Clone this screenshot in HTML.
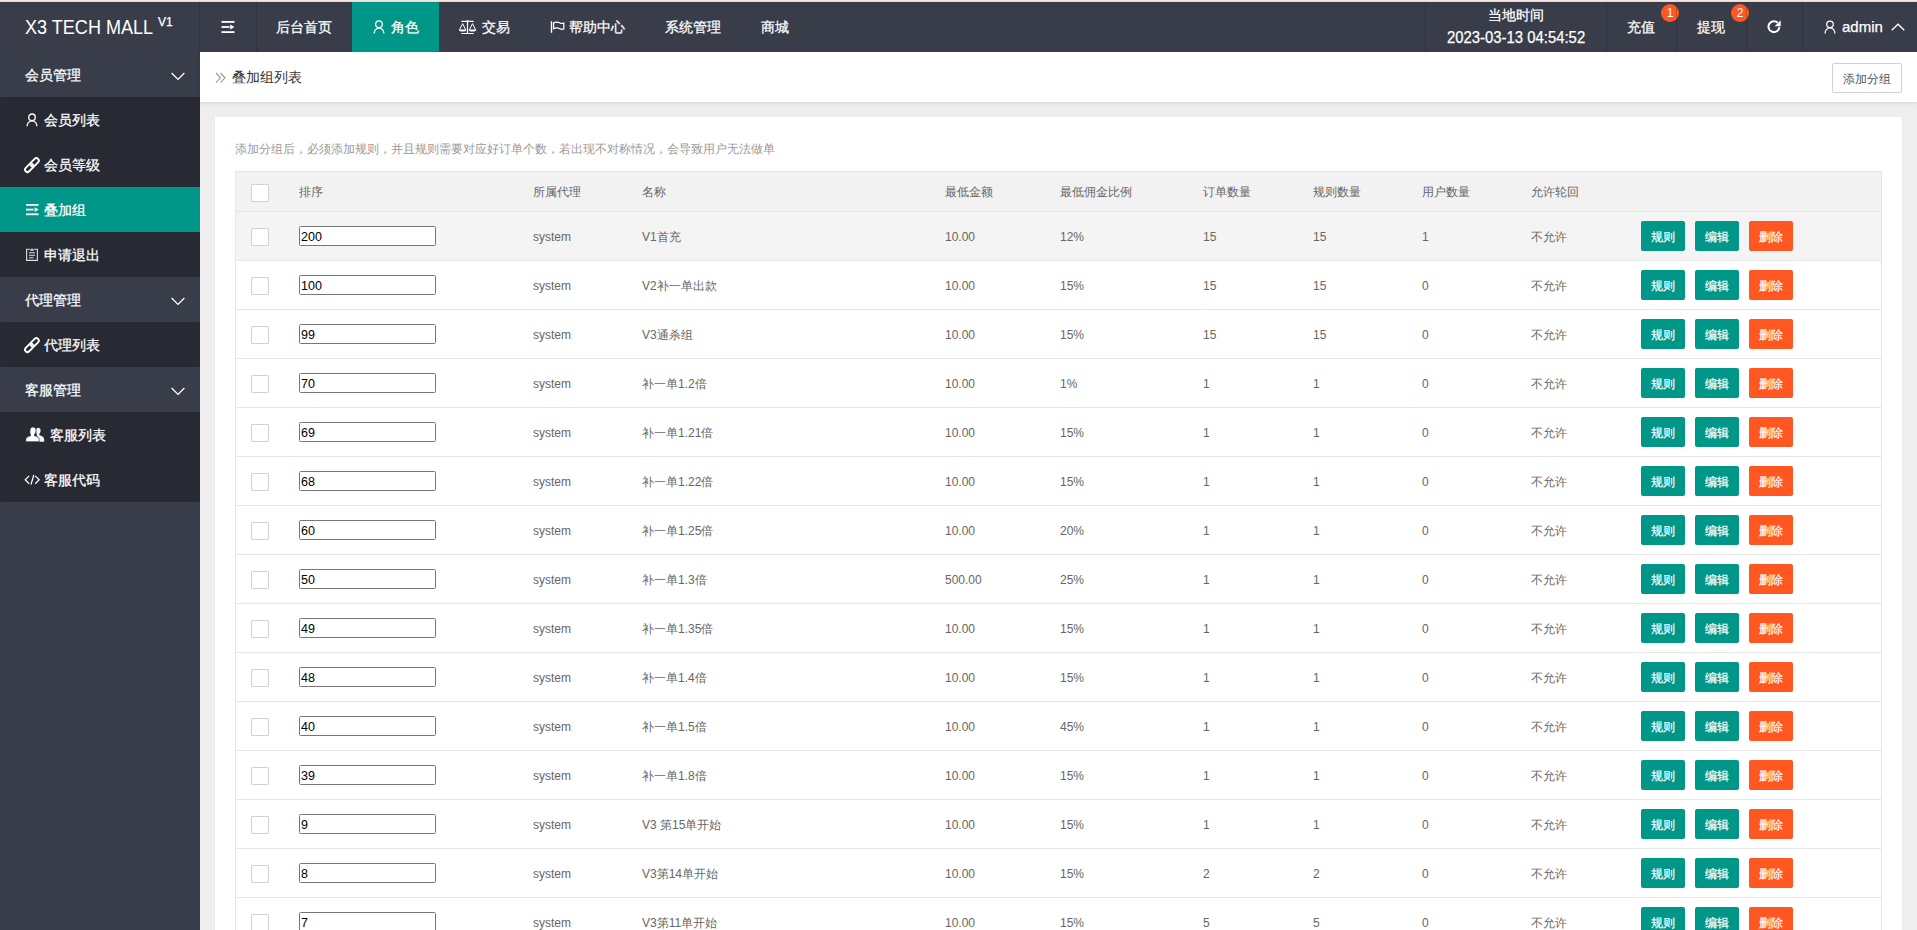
<!DOCTYPE html><html><head><meta charset="utf-8"><style>*{margin:0;padding:0;box-sizing:border-box}
html,body{width:1917px;height:930px;overflow:hidden}
body{background:#eeeeee;font-family:"Liberation Sans",sans-serif;position:relative;color:#666}
.topline{position:absolute;left:0;top:0;width:1917px;height:2px;background:linear-gradient(#f9e5de 0,#f9e5de 1px,#e8d8d2 1px,#e8d8d2 2px)}
.hdr{position:absolute;left:0;top:2px;width:1917px;height:50px;background:#393d49;color:#fff;font-size:14px}
.hdr .sep{position:absolute;top:0;width:1px;height:50px;background:rgba(0,0,0,.16)}
.hdr .t{position:absolute;white-space:nowrap;line-height:16px;-webkit-text-stroke:0.25px #fff}
.logo{position:absolute;left:25px;top:12px;font-size:21px;line-height:25px;white-space:nowrap;transform:scaleX(0.86);transform-origin:0 0}
.logo sup{font-size:12px;position:relative;top:-9px;vertical-align:baseline;margin-left:3px}
.side{position:absolute;left:0;top:52px;width:200px;height:878px;background:#393d49;color:#fff;font-size:14px}
.side .p{position:absolute;left:0;width:200px;height:45px}
.side .c{position:absolute;left:0;width:200px;background:#282a33;border-radius:2px}
.side .t{position:absolute;white-space:nowrap;line-height:16px;-webkit-text-stroke:0.25px #fff}
.side .act{position:absolute;left:0;width:200px;height:45px;background:#009688}
.crumb{position:absolute;left:200px;top:52px;width:1717px;height:50px;background:#fff;box-shadow:0 1px 3px rgba(0,0,0,.12)}
.crumb .t{position:absolute;left:32px;top:17px;font-size:14px;color:#333;line-height:16px;white-space:nowrap}
.crumb .bt{position:absolute;left:1632px;top:11px;width:70px;height:30px;border:1px solid #d2d2d2;border-radius:2px;font-size:12px;color:#555;line-height:30px;text-align:center}
.card{position:absolute;left:215px;top:117px;width:1687px;height:830px;background:#fff;box-shadow:0 1px 2px 0 rgba(0,0,0,.05)}
.hint{position:absolute;left:20px;top:25px;font-size:12px;color:#999;line-height:14px;white-space:nowrap}
.tbl{position:absolute;left:20px;top:54px;width:1647px;border-left:1px solid #e6e6e6;border-right:1px solid #e6e6e6;border-top:1px solid #e6e6e6}
.thead{position:relative;height:40px;background:#f2f2f2;border-bottom:1px solid #e6e6e6}
.tr{position:relative;height:49px;border-bottom:1px solid #e6e6e6;background:#fff}
.tr.hov{background:#f4f4f4}
.tbl span{position:absolute;font-size:12px;line-height:14px;white-space:nowrap;color:#666}
.thead span{top:13px}
.tr span{top:18px}
.cb{position:absolute;width:18px;height:18px;border:1px solid #d2d2d2;border-radius:1px;background:#fff}
.thead .cb{top:12px}
.tr .cb{top:16px}
.inp{position:absolute;top:14px;width:137px;height:20px;border:1px solid #767676;border-radius:1.5px;background:#fff;font-weight:normal;font-size:12.5px;color:#000;padding-left:1px;line-height:20px}
.btn{position:absolute;top:9px;width:44px;height:30px;border-radius:2px;color:#fff;font-style:normal;font-size:12px;line-height:32px;text-align:center;-webkit-text-stroke:0.2px #fff}
.btn.g{background:#009688}
.btn.o{background:#ff5722}
.badge{position:absolute;top:2px;width:18px;height:18px;border-radius:50%;background:#ff5722;color:#fff;font-size:12px;line-height:18px;text-align:center}
svg{position:absolute;overflow:visible}
</style></head><body><div class="topline"></div><div style="position:absolute;left:0;top:2px;width:1917px;height:1px;background:#2f333f"></div>
<div class="hdr">
 <div class="logo">X3 TECH MALL</div><div class="t" style="left:158px;top:13px;font-size:12px;line-height:14px">V1</div>
 <div class="sep" style="left:199px"></div>
 <div class="sep" style="left:256px"></div>
 <svg style="left:221px;top:19px" width="14" height="12" viewBox="0 0 14 12"><rect x="0.5" y="0" width="13" height="1.8" fill="#fff"/><rect x="0.5" y="5.1" width="8" height="1.8" fill="#fff"/><path d="M9.2 3.6 L13.5 6 L9.2 8.4Z" fill="#fff"/><rect x="0.5" y="10.2" width="13" height="1.8" fill="#fff"/></svg>
 <div class="t" style="left:276px;top:17px">后台首页</div>
 <div style="position:absolute;left:352px;top:0;width:87px;height:50px;background:#009688"></div>
 <svg style="left:373px;top:18px" width="12" height="14" viewBox="0 0 12 14"><circle cx="6" cy="4.2" r="3.3" fill="none" stroke="#fff" stroke-width="1.25"/><path d="M1.1 13.6 A4.9 5.6 0 0 1 10.9 13.6" fill="none" stroke="#fff" stroke-width="1.25"/></svg>
 <div class="t" style="left:391px;top:17px">角色</div>
 <svg style="left:458px;top:16px" width="19" height="17" viewBox="0 0 19 17"><path d="M3.4 3.4 H15.7 M9.5 3.4 V15.5 M3.4 15.5 H15.7" stroke="#fff" stroke-width="1.2" fill="none"/><circle cx="9.5" cy="3.3" r="1.1" fill="#fff"/><path d="M4.6 5.6 L1.6 11.7 M4.6 5.6 L7.6 11.7 M14.5 5.6 L11.5 11.7 M14.5 5.6 L17.5 11.7" stroke="#fff" stroke-width="1" fill="none"/><path d="M0.8 11.4 H8.4 A3.8 2 0 0 1 0.8 11.4Z M10.7 11.4 H18.3 A3.8 2 0 0 1 10.7 11.4Z" fill="#fff"/></svg>
 <div class="t" style="left:482px;top:17px">交易</div>
 <svg style="left:550px;top:14px" width="16" height="18" viewBox="0 0 16 18"><path d="M1.5 5.2 V16.8" stroke="#fff" stroke-width="1.4"/><path d="M3.6 6.9 C6 5.6 8 5.9 10 7 C11.5 7.8 12.5 7.6 13.8 7.1 V12.9 C12.5 13.4 11.5 13.6 10 12.8 C8 11.7 6 11.4 3.6 12.7Z" stroke="#fff" stroke-width="1.2" fill="none"/></svg>
 <div class="t" style="left:569px;top:17px">帮助中心</div>
 <div class="t" style="left:665px;top:17px">系统管理</div>
 <div class="t" style="left:761px;top:17px">商城</div>
 <div class="sep" style="left:1425px"></div>
 <div class="t" style="left:1488px;top:5px">当地时间</div>
 <div class="t" style="left:1447px;top:28px;font-size:16px;transform:scaleX(0.93);transform-origin:0 0">2023-03-13 04:54:52</div>
 <div class="badge" style="left:1661px">1</div>
 <div class="badge" style="left:1731px">2</div>
 <div class="sep" style="left:1606px"></div>
 <div class="t" style="left:1627px;top:17px">充值</div>
 <div class="sep" style="left:1676px"></div>
 <div class="t" style="left:1697px;top:17px">提现</div>
 <div class="sep" style="left:1746px"></div>
 <svg style="left:1766px;top:17px" width="16" height="16" viewBox="0 0 16 16"><path d="M13.35 8.2 A5.45 5.45 0 1 1 11.75 3.75" stroke="#fff" stroke-width="2" fill="none"/><path d="M14.7 1.2 V7.3 H8.6Z" fill="#fff"/></svg>
 <div class="sep" style="left:1802px"></div>
 <svg style="left:1824px;top:18px" width="12" height="14" viewBox="0 0 12 14"><circle cx="6" cy="4.3" r="3.3" fill="none" stroke="#fff" stroke-width="1.25"/><path d="M1.1 13.4 A4.9 5.6 0 0 1 10.9 13.4" fill="none" stroke="#fff" stroke-width="1.25"/></svg>
 <div class="t" style="left:1842px;top:17px;font-size:15px">admin</div>
 <svg style="left:1891px;top:20px" width="14" height="10" viewBox="0 0 14 10"><path d="M0.7 8.3 L7 2.2 L13.3 8.3" stroke="#fff" stroke-width="1.3" fill="none"/></svg>
</div>
<div class="side">
 <div class="p" style="top:0"><div class="t" style="left:25px;top:15px">会员管理</div><svg style="left:171px;top:20px" width="14" height="9" viewBox="0 0 14 9"><path d="M0.6 1 L7 7.4 L13.4 1" stroke="#fff" stroke-width="1.3" fill="none"/></svg></div>
 <div class="c" style="top:45px;height:180px"></div>
 <svg style="left:26px;top:61px" width="12" height="14" viewBox="0 0 12 14"><circle cx="6" cy="4.3" r="3.3" fill="none" stroke="#fff" stroke-width="1.3"/><path d="M1.1 13.2 A4.9 5.4 0 0 1 10.9 13.2" fill="none" stroke="#fff" stroke-width="1.3"/></svg>
 <div class="t" style="left:44px;top:60px">会员列表</div>
 <svg style="left:24px;top:105px" width="16" height="16" viewBox="0 0 16 16"><g fill="none" stroke="#fff" stroke-width="1.9"><rect x="-4.9" y="-2.45" width="9.8" height="4.9" rx="2.45" transform="translate(5.2 10.8) rotate(-45)"/><rect x="-4.9" y="-2.45" width="9.8" height="4.9" rx="2.45" transform="translate(10.6 5.4) rotate(-45)"/></g></svg>
 <div class="t" style="left:44px;top:105px">会员等级</div>
 <div class="act" style="top:135px"></div>
 <svg style="left:26px;top:152px" width="13" height="12" viewBox="0 0 13 12"><rect x="0" y="0" width="12.5" height="1.8" fill="#fff"/><rect x="0" y="4.7" width="7.5" height="1.8" fill="#fff"/><path d="M8.6 3.3 L12.6 5.6 L8.6 7.9Z" fill="#fff"/><rect x="0" y="9.4" width="12.5" height="1.8" fill="#fff"/></svg>
 <div class="t" style="left:44px;top:150px">叠加组</div>
 <svg style="left:26px;top:196px" width="12" height="13" viewBox="0 0 12 13"><path d="M4 1.2 H0.6 V12.4 H11.4 V1.2 H8" stroke="#ddd" stroke-width="1.1" fill="none"/><path d="M4 2.8 L5 0.8 H7 L8 2.8Z" fill="#ddd"/><path d="M3 4.7 H9 M3 7.2 H9 M3 9.7 H7.5" stroke="#ddd" stroke-width="1.1"/></svg>
 <div class="t" style="left:44px;top:195px">申请退出</div>
 <div class="p" style="top:225px"><div class="t" style="left:25px;top:15px">代理管理</div><svg style="left:171px;top:20px" width="14" height="9" viewBox="0 0 14 9"><path d="M0.6 1 L7 7.4 L13.4 1" stroke="#fff" stroke-width="1.3" fill="none"/></svg></div>
 <div class="c" style="top:270px;height:45px"></div>
 <svg style="left:24px;top:285px" width="16" height="16" viewBox="0 0 16 16"><g fill="none" stroke="#fff" stroke-width="1.9"><rect x="-4.9" y="-2.45" width="9.8" height="4.9" rx="2.45" transform="translate(5.2 10.8) rotate(-45)"/><rect x="-4.9" y="-2.45" width="9.8" height="4.9" rx="2.45" transform="translate(10.6 5.4) rotate(-45)"/></g></svg>
 <div class="t" style="left:44px;top:285px">代理列表</div>
 <div class="p" style="top:315px"><div class="t" style="left:25px;top:15px">客服管理</div><svg style="left:171px;top:20px" width="14" height="9" viewBox="0 0 14 9"><path d="M0.6 1 L7 7.4 L13.4 1" stroke="#fff" stroke-width="1.3" fill="none"/></svg></div>
 <div class="c" style="top:360px;height:90px"></div>
 <svg style="left:25px;top:375px" width="20" height="16" viewBox="0 0 20 16"><path d="M11 3.5 C11 1.7 12.2 0.8 13.3 0.8 C14.5 0.8 15.6 1.8 15.6 3.6 C15.6 5 15 6.3 14.3 6.9 V8.3 C17 9 19.2 10 19.2 12.5 V14.8 H13 Z" fill="#fff" opacity=".95"/><path d="M5 3.2 C5 1.2 6.3 0 8 0 C9.7 0 11 1.2 11 3.2 C11 5 10.4 6.6 9.5 7.3 V8.8 C12.5 9.5 14.2 10.5 14.2 12.7 V14.8 H0.8 V12.7 C0.8 10.5 2.5 9.5 5.5 8.8 V7.3 C4.6 6.6 5 5 5 3.2Z" fill="#fff" stroke="#282a33" stroke-width="0.7"/></svg>
 <div class="t" style="left:50px;top:375px">客服列表</div>
 <svg style="left:24px;top:423px" width="17" height="10" viewBox="0 0 17 10"><path d="M5.2 0.9 L1.2 4.8 L5.2 8.7 M11.2 0.9 L15.2 4.8 L11.2 8.7" stroke="#fff" stroke-width="1.2" fill="none"/><path d="M9.8 0 L7 9.5" stroke="#fff" stroke-width="1.2"/></svg>
 <div class="t" style="left:44px;top:420px">客服代码</div>
</div>
<div class="crumb"><svg style="left:15px;top:20px" width="12" height="12" viewBox="0 0 12 12"><path d="M1 1 L5.5 5.8 L1 10.6 M5.5 1 L10 5.8 L5.5 10.6" stroke="#999" stroke-width="1.1" fill="none"/></svg><div class="t">叠加组列表</div><div class="bt">添加分组</div></div>
<div class="card"><div class="hint">添加分组后，必须添加规则，并且规则需要对应好订单个数，若出现不对称情况，会导致用户无法做单</div><div class="tbl"><div class="thead"><i class="cb" style="left:15px"></i><span style="left:63px">排序</span><span style="left:297px">所属代理</span><span style="left:406px">名称</span><span style="left:709px">最低金额</span><span style="left:824px">最低佣金比例</span><span style="left:967px">订单数量</span><span style="left:1077px">规则数量</span><span style="left:1186px">用户数量</span><span style="left:1295px">允许轮回</span></div><div class="tr hov"><i class="cb" style="left:15px"></i><b class="inp" style="left:63px">200</b><span style="left:297px">system</span><span style="left:406px">V1首充</span><span style="left:709px">10.00</span><span style="left:824px">12%</span><span style="left:967px">15</span><span style="left:1077px">15</span><span style="left:1186px">1</span><span style="left:1295px">不允许</span><em class="btn g" style="left:1405px">规则</em><em class="btn g" style="left:1459px">编辑</em><em class="btn o" style="left:1513px">删除</em></div><div class="tr"><i class="cb" style="left:15px"></i><b class="inp" style="left:63px">100</b><span style="left:297px">system</span><span style="left:406px">V2补一单出款</span><span style="left:709px">10.00</span><span style="left:824px">15%</span><span style="left:967px">15</span><span style="left:1077px">15</span><span style="left:1186px">0</span><span style="left:1295px">不允许</span><em class="btn g" style="left:1405px">规则</em><em class="btn g" style="left:1459px">编辑</em><em class="btn o" style="left:1513px">删除</em></div><div class="tr"><i class="cb" style="left:15px"></i><b class="inp" style="left:63px">99</b><span style="left:297px">system</span><span style="left:406px">V3通杀组</span><span style="left:709px">10.00</span><span style="left:824px">15%</span><span style="left:967px">15</span><span style="left:1077px">15</span><span style="left:1186px">0</span><span style="left:1295px">不允许</span><em class="btn g" style="left:1405px">规则</em><em class="btn g" style="left:1459px">编辑</em><em class="btn o" style="left:1513px">删除</em></div><div class="tr"><i class="cb" style="left:15px"></i><b class="inp" style="left:63px">70</b><span style="left:297px">system</span><span style="left:406px">补一单1.2倍</span><span style="left:709px">10.00</span><span style="left:824px">1%</span><span style="left:967px">1</span><span style="left:1077px">1</span><span style="left:1186px">0</span><span style="left:1295px">不允许</span><em class="btn g" style="left:1405px">规则</em><em class="btn g" style="left:1459px">编辑</em><em class="btn o" style="left:1513px">删除</em></div><div class="tr"><i class="cb" style="left:15px"></i><b class="inp" style="left:63px">69</b><span style="left:297px">system</span><span style="left:406px">补一单1.21倍</span><span style="left:709px">10.00</span><span style="left:824px">15%</span><span style="left:967px">1</span><span style="left:1077px">1</span><span style="left:1186px">0</span><span style="left:1295px">不允许</span><em class="btn g" style="left:1405px">规则</em><em class="btn g" style="left:1459px">编辑</em><em class="btn o" style="left:1513px">删除</em></div><div class="tr"><i class="cb" style="left:15px"></i><b class="inp" style="left:63px">68</b><span style="left:297px">system</span><span style="left:406px">补一单1.22倍</span><span style="left:709px">10.00</span><span style="left:824px">15%</span><span style="left:967px">1</span><span style="left:1077px">1</span><span style="left:1186px">0</span><span style="left:1295px">不允许</span><em class="btn g" style="left:1405px">规则</em><em class="btn g" style="left:1459px">编辑</em><em class="btn o" style="left:1513px">删除</em></div><div class="tr"><i class="cb" style="left:15px"></i><b class="inp" style="left:63px">60</b><span style="left:297px">system</span><span style="left:406px">补一单1.25倍</span><span style="left:709px">10.00</span><span style="left:824px">20%</span><span style="left:967px">1</span><span style="left:1077px">1</span><span style="left:1186px">0</span><span style="left:1295px">不允许</span><em class="btn g" style="left:1405px">规则</em><em class="btn g" style="left:1459px">编辑</em><em class="btn o" style="left:1513px">删除</em></div><div class="tr"><i class="cb" style="left:15px"></i><b class="inp" style="left:63px">50</b><span style="left:297px">system</span><span style="left:406px">补一单1.3倍</span><span style="left:709px">500.00</span><span style="left:824px">25%</span><span style="left:967px">1</span><span style="left:1077px">1</span><span style="left:1186px">0</span><span style="left:1295px">不允许</span><em class="btn g" style="left:1405px">规则</em><em class="btn g" style="left:1459px">编辑</em><em class="btn o" style="left:1513px">删除</em></div><div class="tr"><i class="cb" style="left:15px"></i><b class="inp" style="left:63px">49</b><span style="left:297px">system</span><span style="left:406px">补一单1.35倍</span><span style="left:709px">10.00</span><span style="left:824px">15%</span><span style="left:967px">1</span><span style="left:1077px">1</span><span style="left:1186px">0</span><span style="left:1295px">不允许</span><em class="btn g" style="left:1405px">规则</em><em class="btn g" style="left:1459px">编辑</em><em class="btn o" style="left:1513px">删除</em></div><div class="tr"><i class="cb" style="left:15px"></i><b class="inp" style="left:63px">48</b><span style="left:297px">system</span><span style="left:406px">补一单1.4倍</span><span style="left:709px">10.00</span><span style="left:824px">15%</span><span style="left:967px">1</span><span style="left:1077px">1</span><span style="left:1186px">0</span><span style="left:1295px">不允许</span><em class="btn g" style="left:1405px">规则</em><em class="btn g" style="left:1459px">编辑</em><em class="btn o" style="left:1513px">删除</em></div><div class="tr"><i class="cb" style="left:15px"></i><b class="inp" style="left:63px">40</b><span style="left:297px">system</span><span style="left:406px">补一单1.5倍</span><span style="left:709px">10.00</span><span style="left:824px">45%</span><span style="left:967px">1</span><span style="left:1077px">1</span><span style="left:1186px">0</span><span style="left:1295px">不允许</span><em class="btn g" style="left:1405px">规则</em><em class="btn g" style="left:1459px">编辑</em><em class="btn o" style="left:1513px">删除</em></div><div class="tr"><i class="cb" style="left:15px"></i><b class="inp" style="left:63px">39</b><span style="left:297px">system</span><span style="left:406px">补一单1.8倍</span><span style="left:709px">10.00</span><span style="left:824px">15%</span><span style="left:967px">1</span><span style="left:1077px">1</span><span style="left:1186px">0</span><span style="left:1295px">不允许</span><em class="btn g" style="left:1405px">规则</em><em class="btn g" style="left:1459px">编辑</em><em class="btn o" style="left:1513px">删除</em></div><div class="tr"><i class="cb" style="left:15px"></i><b class="inp" style="left:63px">9</b><span style="left:297px">system</span><span style="left:406px">V3 第15单开始</span><span style="left:709px">10.00</span><span style="left:824px">15%</span><span style="left:967px">1</span><span style="left:1077px">1</span><span style="left:1186px">0</span><span style="left:1295px">不允许</span><em class="btn g" style="left:1405px">规则</em><em class="btn g" style="left:1459px">编辑</em><em class="btn o" style="left:1513px">删除</em></div><div class="tr"><i class="cb" style="left:15px"></i><b class="inp" style="left:63px">8</b><span style="left:297px">system</span><span style="left:406px">V3第14单开始</span><span style="left:709px">10.00</span><span style="left:824px">15%</span><span style="left:967px">2</span><span style="left:1077px">2</span><span style="left:1186px">0</span><span style="left:1295px">不允许</span><em class="btn g" style="left:1405px">规则</em><em class="btn g" style="left:1459px">编辑</em><em class="btn o" style="left:1513px">删除</em></div><div class="tr"><i class="cb" style="left:15px"></i><b class="inp" style="left:63px">7</b><span style="left:297px">system</span><span style="left:406px">V3第11单开始</span><span style="left:709px">10.00</span><span style="left:824px">15%</span><span style="left:967px">5</span><span style="left:1077px">5</span><span style="left:1186px">0</span><span style="left:1295px">不允许</span><em class="btn g" style="left:1405px">规则</em><em class="btn g" style="left:1459px">编辑</em><em class="btn o" style="left:1513px">删除</em></div></div></div></body></html>
